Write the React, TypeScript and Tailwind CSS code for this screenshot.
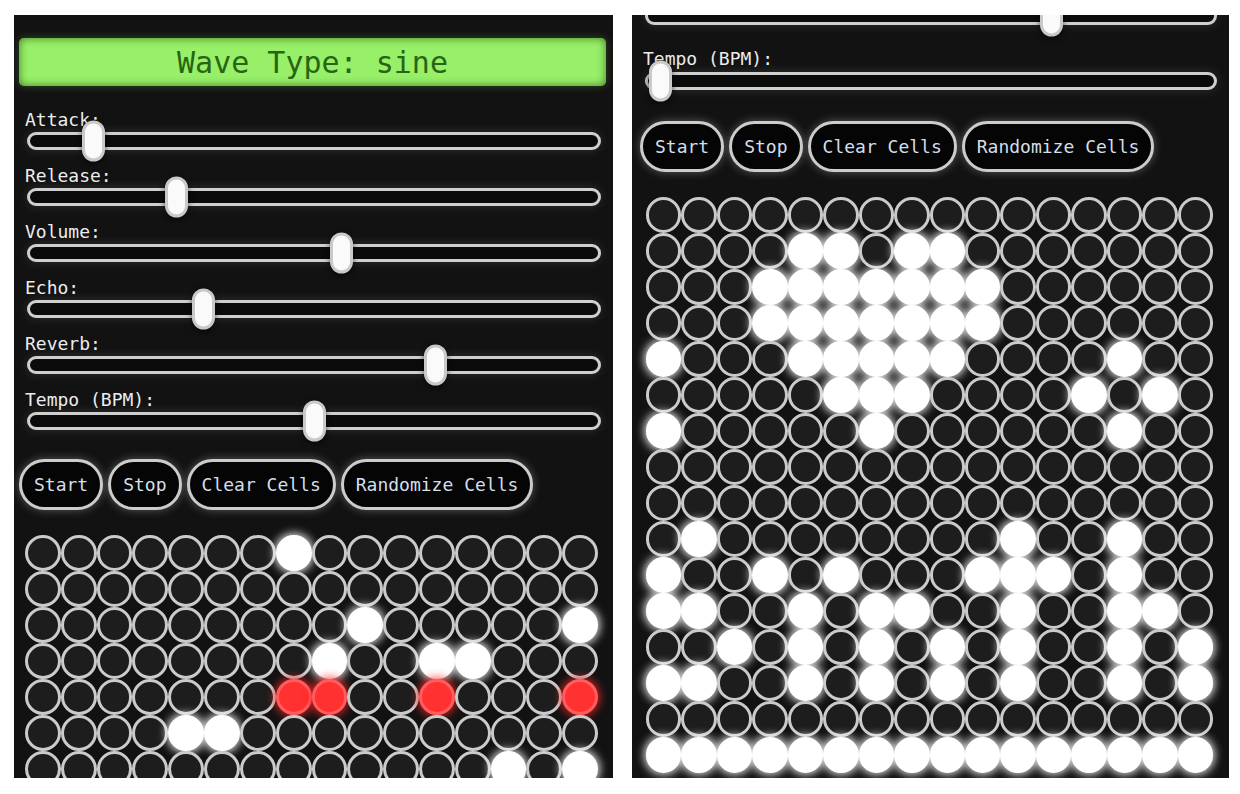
import React from 'react';

type Layout = {
  width: string;
  scroll: number;
  groupGap: string;
  labelGap: string;
  buttonsMt: string;
  buttonsMl: string;
  gridMt: string;
  gridBox: string;
};

type PanelProps = {
  layout: Layout;
  waveType: string;
  values: { label: string; frac: number }[];
  cells: string[];
  playingRow: number | null;
};

const mono = "font-['DejaVu_Sans_Mono','Liberation_Mono',monospace]";

const leftCells = [
  '0000000100000000',
  '0000000000000000',
  '0000000001000001',
  '0000000010011000',
  '0000000110010001',
  '0000110000000000',
  '0000000000000101',
  '0010000000100000',
  '0000000000000000',
  '1000001000000010',
  '0000000000000000',
  '0001000010000000',
  '0000000000010000',
  '0100000000000000',
  '0000010000001000',
  '0000000000000000',
];

const rightCells = [
  '0000000000000000',
  '0000110110000000',
  '0001111111000000',
  '0001111111000000',
  '1000111110000100',
  '0000011100001010',
  '1000001000000100',
  '0000000000000000',
  '0000000000000000',
  '0100000000100100',
  '1001010001110100',
  '1100101100100110',
  '0010101010100101',
  '1100101010100101',
  '0000000000000000',
  '1111111111111111',
];

function Slider({ label, frac, labelGap }: { label: string; frac: number; labelGap: string }) {
  return (
    <div>
      <div className="ml-[11px] text-[18px] leading-[20px] text-[#ececec]">{label}:</div>
      <div
        className={`${labelGap} relative ml-[13px] mr-[12px] h-[18px] rounded-full border-[3px] border-[#cfcfcf] bg-[#0b0b0b] shadow-[0_0_12px_rgba(255,255,255,0.12)]`}
      >
        <div
          className="absolute top-1/2 h-[41px] w-[23px] -translate-y-1/2 rounded-full border-[3px] border-[#c9c9c9] bg-[#fafafa] shadow-[0_2px_6px_rgba(0,0,0,0.6)]"
          style={{ left: `calc(${frac} * (100% - 17px) - 3px)` }}
        />
      </div>
    </div>
  );
}

function Cell({ on, playing }: { on: boolean; playing: boolean }) {
  let cls = 'border-[#cbcbcb] bg-[#1d1d1d]';
  if (on && playing) cls = 'border-[#ff5d5d] bg-[#ff3131] shadow-[0_0_9px_2px_rgba(255,40,40,0.75)]';
  else if (on) cls = 'border-white bg-white shadow-[0_0_9px_2px_rgba(255,255,255,0.85)]';
  return <div className={`h-full w-full rounded-full border-[3px] ${cls}`} />;
}

function SynthPanel({ layout, waveType, values, cells, playingRow }: PanelProps) {
  return (
    <div
      ref={(el) => {
        if (el) el.scrollTop = layout.scroll;
      }}
      className={`${layout.width} h-[763px] shrink-0 overflow-hidden bg-[#121212] ${mono}`}
    >
      {/* Display */}
      <div className="pl-[5px] pr-[7px] pt-[23px]">
        <div className="flex h-[48px] items-center justify-center rounded-[5px] bg-[#98ef68] text-[30px] text-[#286513] shadow-[inset_0_0_8px_rgba(30,80,10,0.75),0_0_8px_rgba(150,240,100,0.25)]">
          Wave Type: {waveType}
        </div>
      </div>

      {/* Sliders */}
      <div className={`mt-[24px] flex flex-col ${layout.groupGap}`}>
        {values.map((v) => (
          <Slider key={v.label} label={v.label} frac={v.frac} labelGap={layout.labelGap} />
        ))}
      </div>

      {/* Buttons */}
      <div className={`${layout.buttonsMt} ${layout.buttonsMl} flex gap-[5px]`}>
        {['Start', 'Stop', 'Clear Cells', 'Randomize Cells'].map((b) => (
          <button
            key={b}
            className="rounded-full border-[3px] border-[#cccccc] bg-[#050505] px-[12px] py-[12px] text-[18px] leading-[21px] text-[#d3dfeb] shadow-[0_0_10px_rgba(255,255,255,0.3)]"
          >
            {b}
          </button>
        ))}
      </div>

      {/* Sequencer grid */}
      <div className={`${layout.gridMt} ${layout.gridBox} grid grid-cols-16 auto-rows-[36px] pb-4`}>
        {cells.map((row, r) =>
          row.split('').map((c, i) => <Cell key={`${r}-${i}`} on={c === '1'} playing={r === playingRow} />)
        )}
      </div>
    </div>
  );
}

export default function App() {
  const leftValues = [
    { label: 'Attack', frac: 0.1 },
    { label: 'Release', frac: 0.25 },
    { label: 'Volume', frac: 0.55 },
    { label: 'Echo', frac: 0.3 },
    { label: 'Reverb', frac: 0.72 },
    { label: 'Tempo (BPM)', frac: 0.5 },
  ];
  const rightValues = leftValues.map((v) => (v.label.startsWith('Tempo') ? { ...v, frac: 0.008 } : v));

  return (
    <div className="flex min-h-screen items-start gap-[19px] bg-white pl-[14px] pt-[15px]">
      <SynthPanel
        layout={{
          width: 'w-[599px]',
          scroll: 0,
          groupGap: 'gap-4',
          labelGap: 'mt-[2px]',
          buttonsMt: 'mt-[29px]',
          buttonsMl: 'ml-[5px]',
          gridMt: 'mt-[25px]',
          gridBox: 'ml-[11px] w-[573px]',
        }}
        waveType="sine"
        values={leftValues}
        cells={leftCells}
        playingRow={4}
      />
      <SynthPanel
        layout={{
          width: 'w-[597px]',
          scroll: 386,
          groupGap: 'gap-[24px]',
          labelGap: 'mt-[3px]',
          buttonsMt: 'mt-[31px]',
          buttonsMl: 'ml-[8px]',
          gridMt: 'mt-[25px]',
          gridBox: 'ml-[14px] w-[567px]',
        }}
        waveType="sine"
        values={rightValues}
        cells={rightCells}
        playingRow={null}
      />
    </div>
  );
}
